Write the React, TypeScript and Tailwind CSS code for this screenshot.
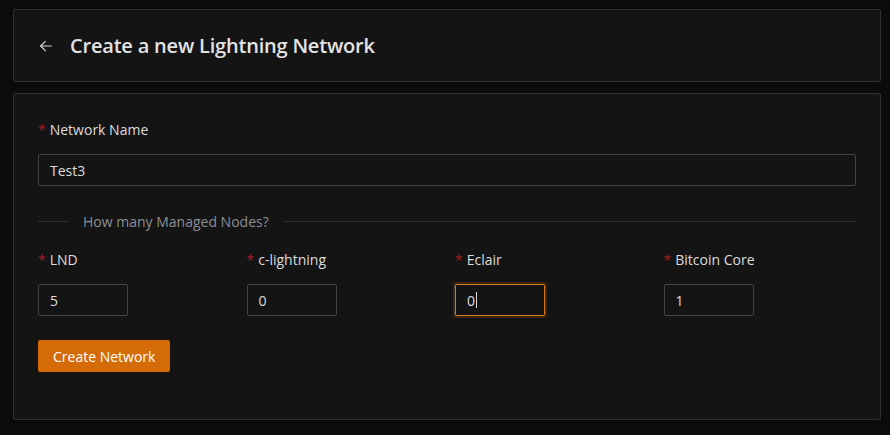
import React from "react";

const font = { fontFamily: '"Open Sans", "Noto Sans", sans-serif' };

function Label({ text }: { text: string }) {
  return (
    <div className="h-[22px] flex items-center text-[14px] text-[#dcdcdc]">
      <span className="text-[#a61d24] mr-[4px] text-[14px] leading-none translate-y-[1px]">*</span>
      <span>{text}</span>
    </div>
  );
}

function SmallInput({ value, focused }: { value: string; focused?: boolean }) {
  return (
    <div
      className={
        "w-[90px] h-[32px] rounded-[2px] flex items-center pl-[11px] text-[14px] text-[#dcdcdc] bg-[#141414] border " +
        (focused
          ? "border-[#d87a16] shadow-[0_0_0_2px_rgba(216,122,22,0.2)]"
          : "border-[#434343]")
      }
    >
      <span>{value}</span>
      {focused && <span className="w-px h-[16px] bg-[#dcdcdc] ml-[1px]" />}
    </div>
  );
}

function Field({ label, value, focused }: { label: string; value: string; focused?: boolean }) {
  return (
    <div className="flex flex-col gap-[14px]">
      <Label text={label} />
      <SmallInput value={value} focused={focused} />
    </div>
  );
}

export default function App() {
  return (
    <div className="w-[890px] h-[435px] bg-[#0b0b0b] pt-[9px] pl-[13px] pr-[9px]" style={font}>
      <div className="h-[73px] bg-[#141414] border border-[#303030] rounded-[2px] flex items-center pl-[24px]">
        <svg width="16" height="16" viewBox="0 0 24 24" fill="none" stroke="#d9d9d9" strokeWidth="1.8" strokeLinecap="round" strokeLinejoin="round">
          <path d="M20 12H4" />
          <path d="M11 5l-7 7 7 7" />
        </svg>
        <span className="ml-[16px] text-[20px] font-semibold text-[#e3e3e3] tracking-[-0.2px]">
          Create a new Lightning Network
        </span>
      </div>
      <div className="mt-[11px] h-[327px] bg-[#141414] border border-[#303030] rounded-[2px] px-[24px] pt-[24px]">
        <div className="flex flex-col gap-[14px]">
          <Label text="Network Name" />
          <div className="h-[32px] rounded-[2px] border border-[#434343] flex items-center pl-[11px] text-[14px] text-[#dcdcdc]">
            Test3
          </div>
        </div>
        <div className="mt-[24px] h-[22px] flex items-center">
          <div className="w-[31px] h-px bg-[#303030]" />
          <span className="px-[14px] text-[14px] font-medium text-[#8b8e94]">How many Managed Nodes?</span>
          <div className="flex-1 h-px bg-[#303030]" />
        </div>
        <div className="mt-[16px] grid grid-cols-4 gap-x-[16px]">
          <Field label="LND" value="5" />
          <Field label="c-lightning" value="0" />
          <Field label="Eclair" value="0" focused />
          <Field label="Bitcoin Core" value="1" />
        </div>
        <button className="mt-[24px] h-[32px] px-[15px] rounded-[2px] bg-[#d46b08] text-white text-[14px]">
          Create Network
        </button>
      </div>
    </div>
  );
}
